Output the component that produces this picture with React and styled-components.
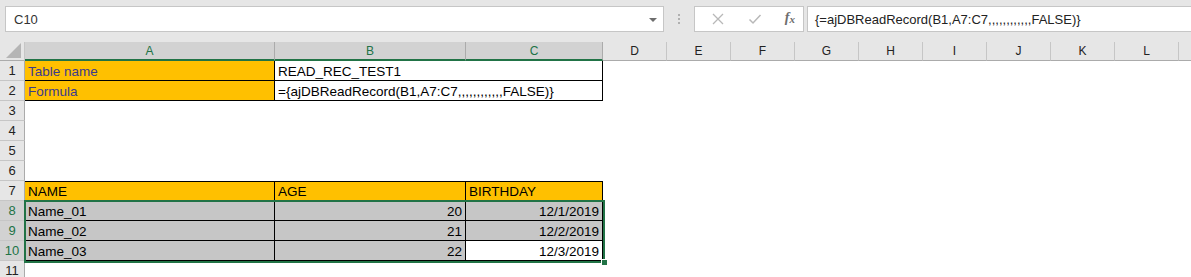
import styled, { createGlobalStyle } from "styled-components";

const GlobalStyle = createGlobalStyle`
  html, body {
    margin: 0;
    padding: 0;
    background: #ffffff;
    overflow: hidden;
  }
  * {
    box-sizing: border-box;
  }
`;

const COLS = [
  { name: "A", width: 250, selected: true },
  { name: "B", width: 191, selected: true },
  { name: "C", width: 137, selected: true },
  { name: "D", width: 64 },
  { name: "E", width: 64 },
  { name: "F", width: 64 },
  { name: "G", width: 64 },
  { name: "H", width: 64 },
  { name: "I", width: 64 },
  { name: "J", width: 64 },
  { name: "K", width: 64 },
  { name: "L", width: 64 },
  { name: "", width: 64 },
];

const GRID_TEMPLATE = `25px ${COLS.map((c) => c.width + "px").join(" ")}`;

const FORMULA = "ajDBReadRecord(B1,A7:C7,,,,,,,,,,,,FALSE)";

export default function App() {
  return (
    <Page>
      <GlobalStyle />
      <Toolbar>
        <NameBox>
          <span>C10</span>
          <DropArrow />
        </NameBox>
        <Grip>
          <i />
          <i />
          <i />
        </Grip>
        <ButtonBox>
          <ToolIcon viewBox="0 0 14 14">
            <path d="M2 2 L12 12 M12 2 L2 12" stroke="#b8b8b8" strokeWidth="1.3" fill="none" />
          </ToolIcon>
          <ToolIcon viewBox="0 0 14 14">
            <path d="M1.5 7.5 L5 11 L12.5 3" stroke="#b8b8b8" strokeWidth="1.5" fill="none" />
          </ToolIcon>
          <Fx>
            f<sub>x</sub>
          </Fx>
        </ButtonBox>
        <FormulaBox>{"{=" + FORMULA + "}"}</FormulaBox>
      </Toolbar>

      <Sheet>
        <Corner>
          <svg width="17" height="17" viewBox="0 0 17 17">
            <path d="M16 1 L16 16 L1 16 Z" fill="#b5b5b5" />
          </svg>
        </Corner>
        {COLS.map((c, i) => (
          <ColHeader key={i} $selected={c.selected}>
            {c.name}
          </ColHeader>
        ))}

        <RowHeader>1</RowHeader>
        <Cell $fill="#ffc000" $color="#3b3b8c" $right $bottom>
          Table name
        </Cell>
        <Cell $span={2} $right $bottom>
          READ_REC_TEST1
        </Cell>
        <Empty $span={10} />

        <RowHeader>2</RowHeader>
        <Cell $fill="#ffc000" $color="#3b3b8c" $right $bottom>
          Formula
        </Cell>
        <Cell $span={2} $right $bottom>
          {"={" + FORMULA + "}"}
        </Cell>
        <Empty $span={10} />

        {[3, 4, 5, 6].map((r) => (
          <Row key={r}>
            <RowHeader>{r}</RowHeader>
            <Empty $span={13} />
          </Row>
        ))}

        <RowHeader>7</RowHeader>
        <Cell $fill="#ffc000" $right $top $bottom>
          NAME
        </Cell>
        <Cell $fill="#ffc000" $right $top $bottom>
          AGE
        </Cell>
        <Cell $fill="#ffc000" $right $top $bottom>
          BIRTHDAY
        </Cell>
        <Empty $span={10} />

        {[
          ["Name_01", "20", "12/1/2019"],
          ["Name_02", "21", "12/2/2019"],
          ["Name_03", "22", "12/3/2019"],
        ].map((row, i) => (
          <Row key={i}>
            <RowHeader $selected>{8 + i}</RowHeader>
            <Cell $fill="#c6c6c6" $right $bottom>
              {row[0]}
            </Cell>
            <Cell $fill="#c6c6c6" $right $bottom $num>
              {row[1]}
            </Cell>
            <Cell $fill={i === 2 ? "#ffffff" : "#c6c6c6"} $right $bottom $num>
              {row[2]}
            </Cell>
            <Empty $span={10} />
          </Row>
        ))}

        <RowHeader>11</RowHeader>
        <Empty $span={13} />

        <Selection>
          <Handle />
        </Selection>
      </Sheet>
    </Page>
  );
}

const Page = styled.div`
  width: 1191px;
  height: 277px;
  overflow: hidden;
  background: #ffffff;
  font-family: "Liberation Sans", Arial, sans-serif;
`;

const Toolbar = styled.div`
  height: 42px;
  background: #e6e6e6;
  display: flex;
  align-items: flex-start;
  padding: 6px 0 0 5px;
`;

const BoxBase = styled.div`
  height: 26px;
  background: #ffffff;
  border: 1px solid #c6c6c6;
  display: flex;
  align-items: center;
`;

const NameBox = styled(BoxBase)`
  width: 659px;
  padding: 0 6px 0 8px;
  justify-content: space-between;
  font-size: 13px;
  color: #333333;
`;

const DropArrow = styled.span`
  width: 0;
  height: 0;
  border-left: 4px solid transparent;
  border-right: 4px solid transparent;
  border-top: 4px solid #6d6d6d;
  margin-top: 1px;
`;

const Grip = styled.div`
  width: 30px;
  height: 26px;
  display: flex;
  flex-direction: column;
  align-items: center;
  justify-content: center;
  gap: 2px;

  i {
    width: 2px;
    height: 2px;
    background: #b0b0b0;
  }
`;

const ButtonBox = styled(BoxBase)`
  width: 110px;
  padding: 0 8px 0 16px;
  justify-content: space-between;
`;

const ToolIcon = styled.svg`
  width: 14px;
  height: 14px;
`;

const Fx = styled.span`
  font-family: "Liberation Serif", "Times New Roman", serif;
  font-style: italic;
  font-weight: bold;
  font-size: 14px;
  color: #6d6d6d;
  margin-top: -3px;

  sub {
    font-size: 11px;
    vertical-align: -1px;
  }
`;

const FormulaBox = styled(BoxBase)`
  flex: 1;
  margin-left: 3px;
  border-right: none;
  padding-left: 7px;
  font-size: 13px;
  color: #222222;
`;

const Sheet = styled.div`
  position: relative;
  display: grid;
  grid-template-columns: ${GRID_TEMPLATE};
  grid-template-rows: 19px;
  grid-auto-rows: 20px;
`;

const Row = styled.div`
  display: contents;
`;

const Corner = styled.div`
  background: #e6e6e6;
  border-right: 1px solid #c6c6c6;
  border-bottom: 1px solid #ababab;
  display: flex;
  align-items: flex-end;
  justify-content: flex-end;
  padding: 0 2px 1px 0;
`;

const ColHeader = styled.div`
  background: ${(p) => (p.$selected ? "#d2d2d2" : "#e6e6e6")};
  color: ${(p) => (p.$selected ? "#217346" : "#222222")};
  border-right: 1px solid ${(p) => (p.$selected ? "#ababab" : "#c6c6c6")};
  border-bottom: ${(p) => (p.$selected ? "2px solid #217346" : "1px solid #ababab")};
  font-family: "Liberation Sans", Arial, sans-serif;
  font-size: 12px;
  display: flex;
  align-items: center;
  justify-content: center;
  padding-top: ${(p) => (p.$selected ? "1px" : "0")};
`;

const RowHeader = styled.div`
  background: ${(p) => (p.$selected ? "#d2d2d2" : "#e6e6e6")};
  color: ${(p) => (p.$selected ? "#217346" : "#222222")};
  border-right: 1px solid #ababab;
  border-bottom: 1px solid #c6c6c6;
  font-size: 13px;
  display: flex;
  align-items: center;
  justify-content: center;
`;

const Cell = styled.div`
  grid-column: span ${(p) => p.$span || 1};
  background: ${(p) => p.$fill || "#ffffff"};
  color: ${(p) => p.$color || "#000000"};
  border-right: ${(p) => (p.$right ? "1px solid #000" : "none")};
  border-bottom: ${(p) => (p.$bottom ? "1px solid #000" : "none")};
  border-top: ${(p) => (p.$top ? "1px solid #000" : "none")};
  font-size: 13.5px;
  display: flex;
  align-items: flex-end;
  justify-content: ${(p) => (p.$num ? "flex-end" : "flex-start")};
  padding: 0 3px 1px 3px;
  white-space: nowrap;
  overflow: hidden;
`;

const Empty = styled.div`
  grid-column: span ${(p) => p.$span || 1};
`;

const Selection = styled.div`
  position: absolute;
  left: 24px;
  top: 158px;
  width: 581px;
  height: 63px;
  border: 2px solid #217346;
  pointer-events: none;
`;

const Handle = styled.div`
  position: absolute;
  right: -5px;
  bottom: -5px;
  width: 7px;
  height: 7px;
  background: #217346;
  border: 1px solid #ffffff;
`;
